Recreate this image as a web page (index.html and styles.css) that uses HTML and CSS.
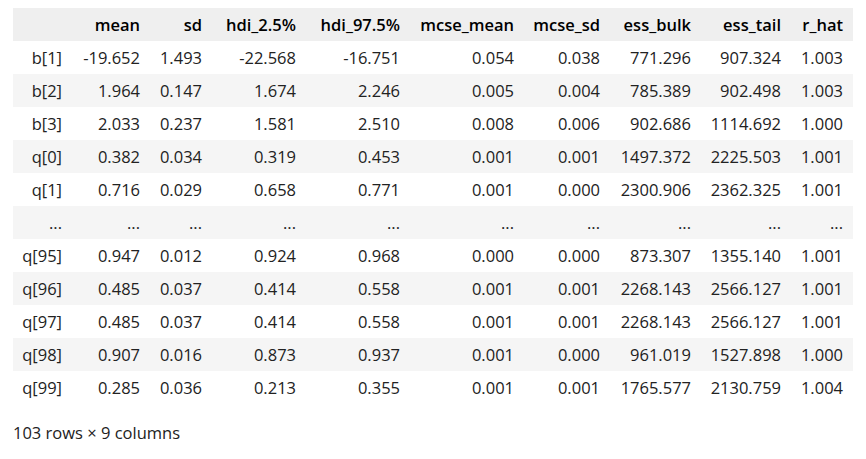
FILE: index.html
```html
<!DOCTYPE html>
<html>
<head>
<meta charset="utf-8">
<link rel="stylesheet" href="styles.css">
</head>
<body>
<div class="output">
<table class="dataframe">
<colgroup>
<col class="c0"><col class="c1"><col class="c2"><col class="c3"><col class="c4"><col class="c5"><col class="c6"><col class="c7"><col class="c8"><col class="c9">
</colgroup>
<thead>
<tr><th></th><th>mean</th><th>sd</th><th>hdi_2.5%</th><th>hdi_97.5%</th><th>mcse_mean</th><th>mcse_sd</th><th>ess_bulk</th><th>ess_tail</th><th>r_hat</th></tr>
</thead>
<tbody>
<tr><th>b[1]</th><td>-19.652</td><td>1.493</td><td>-22.568</td><td>-16.751</td><td>0.054</td><td>0.038</td><td>771.296</td><td>907.324</td><td>1.003</td></tr>
<tr><th>b[2]</th><td>1.964</td><td>0.147</td><td>1.674</td><td>2.246</td><td>0.005</td><td>0.004</td><td>785.389</td><td>902.498</td><td>1.003</td></tr>
<tr><th>b[3]</th><td>2.033</td><td>0.237</td><td>1.581</td><td>2.510</td><td>0.008</td><td>0.006</td><td>902.686</td><td>1114.692</td><td>1.000</td></tr>
<tr><th>q[0]</th><td>0.382</td><td>0.034</td><td>0.319</td><td>0.453</td><td>0.001</td><td>0.001</td><td>1497.372</td><td>2225.503</td><td>1.001</td></tr>
<tr><th>q[1]</th><td>0.716</td><td>0.029</td><td>0.658</td><td>0.771</td><td>0.001</td><td>0.000</td><td>2300.906</td><td>2362.325</td><td>1.001</td></tr>
<tr><th>...</th><td>...</td><td>...</td><td>...</td><td>...</td><td>...</td><td>...</td><td>...</td><td>...</td><td>...</td></tr>
<tr><th>q[95]</th><td>0.947</td><td>0.012</td><td>0.924</td><td>0.968</td><td>0.000</td><td>0.000</td><td>873.307</td><td>1355.140</td><td>1.001</td></tr>
<tr><th>q[96]</th><td>0.485</td><td>0.037</td><td>0.414</td><td>0.558</td><td>0.001</td><td>0.001</td><td>2268.143</td><td>2566.127</td><td>1.001</td></tr>
<tr><th>q[97]</th><td>0.485</td><td>0.037</td><td>0.414</td><td>0.558</td><td>0.001</td><td>0.001</td><td>2268.143</td><td>2566.127</td><td>1.001</td></tr>
<tr><th>q[98]</th><td>0.907</td><td>0.016</td><td>0.873</td><td>0.937</td><td>0.001</td><td>0.000</td><td>961.019</td><td>1527.898</td><td>1.000</td></tr>
<tr><th>q[99]</th><td>0.285</td><td>0.036</td><td>0.213</td><td>0.355</td><td>0.001</td><td>0.001</td><td>1765.577</td><td>2130.759</td><td>1.004</td></tr>
</tbody>
</table>
<p class="shape">103 rows × 9 columns</p>
</div>
</body>
</html>
```
FILE: styles.css
```css
body {
  margin: 0;
  background: #ffffff;
  font-family: "Open Sans", "Noto Sans", sans-serif;
  color: #222222;
}
.output {
  padding: 8px 13px;
}
.dataframe {
  border-collapse: collapse;
  table-layout: fixed;
  width: 840px;
  font-size: 16.5px;
}
.c0 { width: 59px; }
.c1 { width: 78px; }
.c2 { width: 62px; }
.c3 { width: 94px; }
.c4 { width: 104px; }
.c5 { width: 114px; }
.c6 { width: 86px; }
.c7 { width: 91px; }
.c8 { width: 90px; }
.c9 { width: 62px; }
.dataframe th,
.dataframe td {
  height: 33px;
  padding: 0 10px 0 0;
  text-align: right;
  white-space: nowrap;
  box-sizing: border-box;
  line-height: 20px;
}
.dataframe thead th {
  font-weight: 600;
  color: #000000;
  background: #efefef;
}
.dataframe tbody th {
  font-weight: normal;
}
.dataframe tbody tr:nth-child(even) {
  background: #f5f5f5;
}
.shape {
  margin: 18px 0 0 0;
  font-size: 16.5px;
  line-height: 22px;
}
```
